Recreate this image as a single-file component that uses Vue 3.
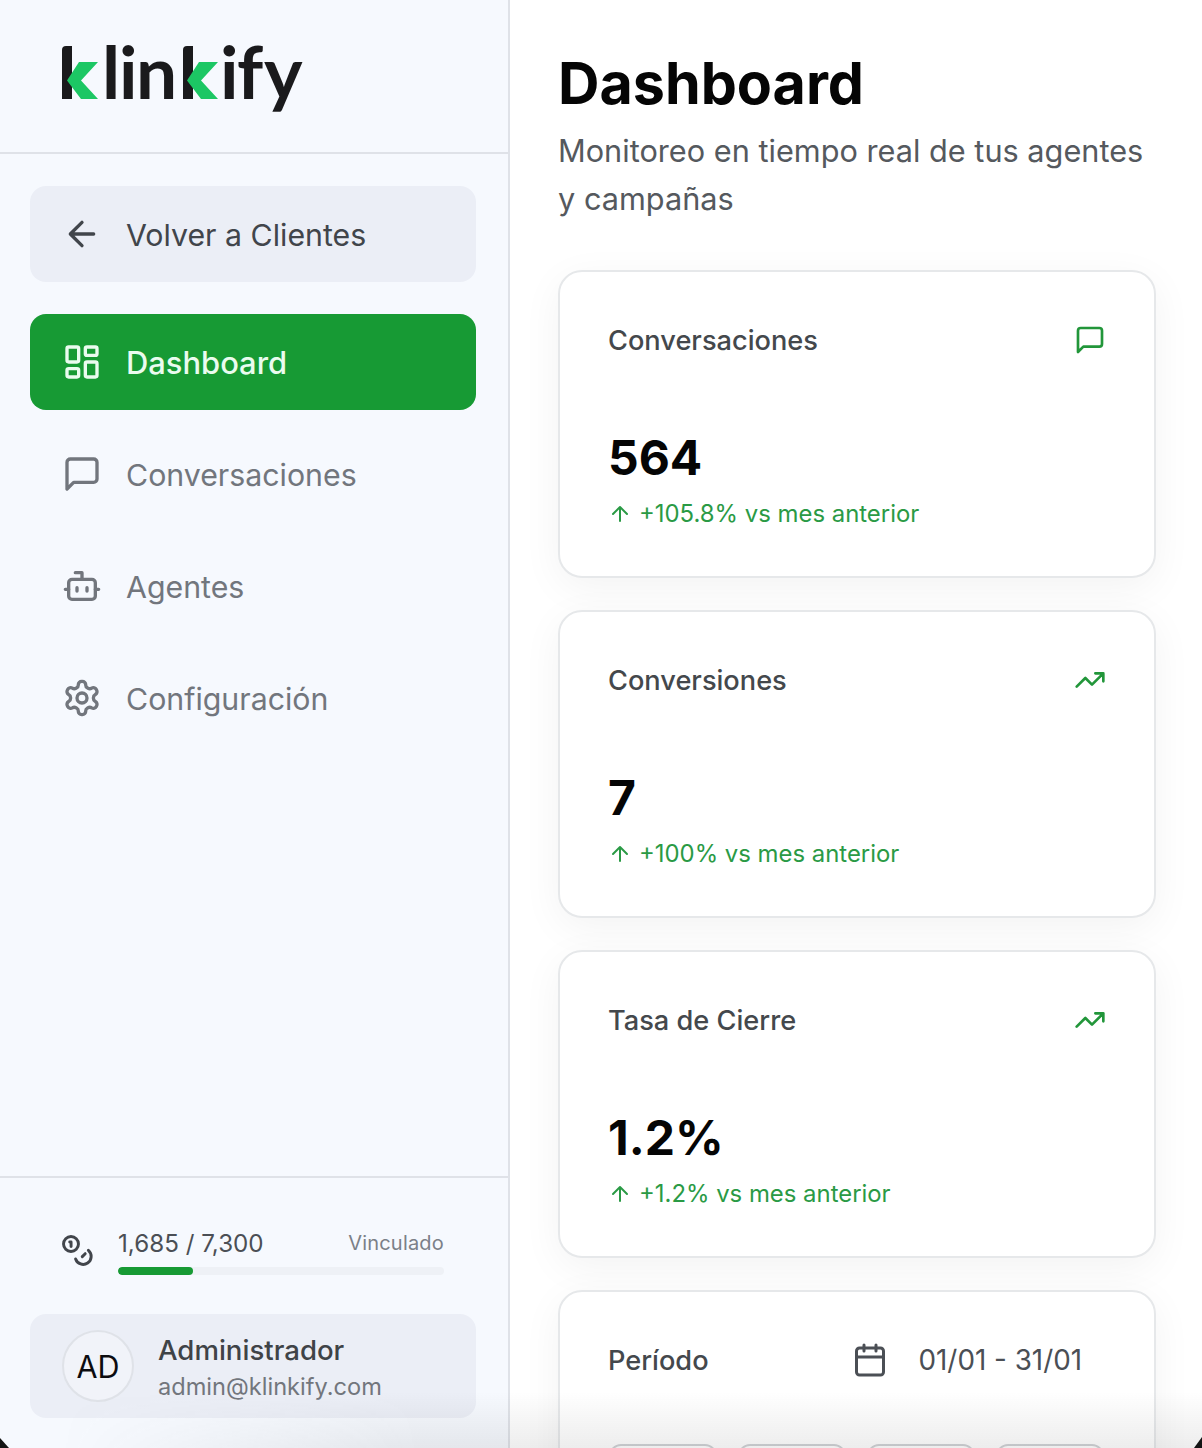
<script setup>
const stats = [
  { title: 'Conversaciones', icon: 'chat', value: '564', delta: '+105.8% vs mes anterior' },
  { title: 'Conversiones', icon: 'trend', value: '7', delta: '+100% vs mes anterior' },
  { title: 'Tasa de Cierre', icon: 'trend', value: '1.2%', delta: '+1.2% vs mes anterior' },
]
</script>

<template>
  <div class="page">
    <aside class="sidebar">
      <div class="brand">
        <div class="logo" role="img" aria-label="klinkify">
          <span class="lt lt-k">k<svg class="chev" viewBox="0 0 32 37"><path d="M12 0H31L14 18.500L31 37H14L0 18.500Z" fill="#1cc764"/></svg></span><span class="lt lt-l">l</span><span class="lt lt-i">i</span><span class="lt lt-n">n</span><span class="lt lt-k lt-k2">k<svg class="chev" viewBox="0 0 32 37"><path d="M12 0H31L14 18.500L31 37H14L0 18.500Z" fill="#1cc764"/></svg></span><span class="lt lt-i">i</span><span class="lt lt-f">f</span><span class="lt lt-y">y</span>
        </div>
      </div>
      <nav class="nav">
        <a class="item back">
          <svg class="ic" viewBox="0 0 24 24"><path d="M19 12H5M12 19l-7-7 7-7"/></svg>
          <span class="label">Volver a Clientes</span>
        </a>
        <a class="item active">
          <svg class="ic" viewBox="0 0 24 24"><rect x="3" y="3" width="7" height="9" rx="1"/><rect x="14" y="3" width="7" height="5" rx="1"/><rect x="14" y="12" width="7" height="9" rx="1"/><rect x="3" y="16" width="7" height="5" rx="1"/></svg>
          <span class="label">Dashboard</span>
        </a>
        <a class="item">
          <svg class="ic" viewBox="0 0 24 24"><path d="M21 15a2 2 0 0 1-2 2H7l-4 4V5a2 2 0 0 1 2-2h14a2 2 0 0 1 2 2z"/></svg>
          <span class="label">Conversaciones</span>
        </a>
        <a class="item">
          <svg class="ic" viewBox="0 0 24 24"><path d="M12 8V4H8"/><rect x="4" y="8" width="16" height="12" rx="2"/><path d="M2 14h2M20 14h2M15 13v2M9 13v2"/></svg>
          <span class="label">Agentes</span>
        </a>
        <a class="item">
          <svg class="ic" viewBox="0 0 24 24"><path d="M12.220 2h-.440a2 2 0 0 0-2 2v.180a2 2 0 0 1-1 1.730l-.430.250a2 2 0 0 1-2 0l-.150-.080a2 2 0 0 0-2.730.730l-.220.380a2 2 0 0 0 .730 2.730l.150.100a2 2 0 0 1 1 1.720v.510a2 2 0 0 1-1 1.740l-.150.090a2 2 0 0 0-.730 2.730l.220.380a2 2 0 0 0 2.730.730l.150-.080a2 2 0 0 1 2 0l.430.250a2 2 0 0 1 1 1.730V20a2 2 0 0 0 2 2h.440a2 2 0 0 0 2-2v-.180a2 2 0 0 1 1-1.730l.430-.250a2 2 0 0 1 2 0l.150.080a2 2 0 0 0 2.730-.730l.220-.390a2 2 0 0 0-.730-2.730l-.150-.080a2 2 0 0 1-1-1.740v-.500a2 2 0 0 1 1-1.740l.150-.090a2 2 0 0 0 .730-2.730l-.220-.380a2 2 0 0 0-2.730-.730l-.150.080a2 2 0 0 1-2 0l-.430-.250a2 2 0 0 1-1-1.730V4a2 2 0 0 0-2-2z"/><circle cx="12" cy="12" r="3"/></svg>
          <span class="label">Configuración</span>
        </a>
      </nav>
      <div class="foot">
        <div class="credits">
          <svg class="coins" viewBox="0 0 24 24"><circle cx="6.750" cy="6.750" r="5.600"/><path d="M5.800 5.200h1v3.400M19.800 11.500A6 6 0 1 1 10.200 18M17.400 14L15.200 16.200"/></svg>
          <div class="meter">
            <div class="meter-top"><span class="used">1,685 / 7,300</span><span class="linked">Vinculado</span></div>
            <div class="track"><div class="fill"></div></div>
          </div>
        </div>
        <div class="user">
          <div class="avatar">AD</div>
          <div class="who">
            <div class="name">Administrador</div>
            <div class="mail">admin@klinkify.com</div>
          </div>
        </div>
      </div>
    </aside>
    <main class="main">
      <h1>Dashboard</h1>
      <p class="sub">Monitoreo en tiempo real de tus agentes y campañas</p>
      <section v-for="s in stats" :key="s.title" class="card">
        <div class="card-head">
          <span class="card-title">{{ s.title }}</span>
          <svg v-if="s.icon === 'chat'" class="card-ic" viewBox="0 0 24 24"><path d="M21 15a2 2 0 0 1-2 2H7l-4 4V5a2 2 0 0 1 2-2h14a2 2 0 0 1 2 2z"/></svg>
          <svg v-else class="card-ic" viewBox="0 0 24 24"><path d="M22 7l-8.500 8.500-5-5L2 17M16 7h6v6"/></svg>
        </div>
        <div class="value">{{ s.value }}</div>
        <div class="delta">
          <svg class="up" viewBox="0 0 24 24"><path d="M12 19V5M5 12l7-7 7 7"/></svg>
          <span>{{ s.delta }}</span>
        </div>
      </section>
      <section class="card period">
        <div class="period-head">
          <span class="card-title">Período</span>
          <div class="range">
            <svg class="cal" viewBox="0 0 24 24"><path d="M8 2v4M16 2v4"/><rect x="3" y="4" width="18" height="18" rx="2"/><path d="M3 10h18"/></svg>
            <span>01/01 - 31/01</span>
          </div>
        </div>
        <div class="pills"><span class="pill"></span><span class="pill"></span><span class="pill"></span><span class="pill"></span></div>
      </section>
    </main>
    <div class="fade"></div>
    <i class="corner cl"></i><i class="corner cr"></i>
  </div>
</template>

<style>
html, body { margin: 0; background: #fff; }
</style>

<style scoped>
.page { position: relative; width: 1202px; height: 1448px; display: flex; overflow: hidden; font-family: Inter, "Liberation Sans", sans-serif; background: #fff; }
.sidebar { width: 508px; height: 1448px; flex: none; display: flex; flex-direction: column; background: #f6f9fe; border-right: 2px solid #dfe2e8; }
.brand { height: 106px; flex: none; border-bottom: 2px solid #dfe2e8; padding: 46px 0 0 62px; }
.logo { display: flex; height: 74px; font: 700 73px/50px Lato, sans-serif; color: #1a1a1c; }
.lt { display: block; position: relative; }
.lt-k { width: 40px; color: transparent; }
.lt-k2 { width: 37px; }
.lt-k::before { content: ""; position: absolute; left: 0; top: 0; width: 10px; height: 53px; background: #1a1a1c; border-radius: 4px 0 0 0; }
.chev { position: absolute; left: 5px; top: 16px; width: 32px; height: 37px; }
.lt-k2 .chev { left: 4px; }
.lt-l { width: 17px; }
.lt-i { width: 17px; }
.lt-n { width: 47px; }
.lt-f { width: 27px; }
.lt-y { width: 38px; }
.nav { display: flex; flex-direction: column; padding: 32px 32px 0 30px; flex: 1; }
.item { display: flex; align-items: center; height: 96px; border-radius: 16px; padding: 0 32px; gap: 24px; font-size: 30.300px; color: #72767d; margin-bottom: 16px; }
.label { padding-top: 2px; }
.ic { width: 40px; height: 40px; flex: none; fill: none; stroke: currentColor; stroke-width: 2; stroke-linecap: round; stroke-linejoin: round; }
.back { background: #ebeef6; color: #41454b; margin-bottom: 32px; }
.active { background: #179a34; color: #eafcef; font-weight: 500; font-size: 30.900px; }
.active .label { padding-top: 0; }
.foot { border-top: 2px solid #dfe2e8; padding: 53px 32px 30px 30px; flex: none; }
.credits { display: flex; align-items: center; padding: 0 32px; gap: 24px; height: 40px; margin-bottom: 43px; }
.coins { width: 32px; height: 32px; flex: none; fill: none; stroke: #41454b; stroke-width: 2.200; stroke-linecap: round; stroke-linejoin: round; }
.meter { flex: 1; }
.meter-top { display: flex; justify-content: space-between; align-items: center; line-height: 32px; }
.used { font-size: 24.200px; color: #4b4f55; }
.linked { font-size: 20px; color: #7b8088; letter-spacing: .2px; margin-bottom: 2px; }
.track { height: 8px; border-radius: 4px; background: #eef1f6; margin-top: 6px; overflow: hidden; }
.fill { width: 23%; height: 100%; border-radius: 4px; background: #179a34; }
.user { display: flex; align-items: center; height: 104px; background: #ebeef6; border-radius: 16px; padding: 0 32px; gap: 24px; }
.avatar { width: 72px; height: 72px; box-sizing: border-box; border: 2px solid #dfe2e8; border-radius: 50%; background: #f1f3f9; color: #0c0c10; display: flex; align-items: center; justify-content: center; font-size: 30.500px; }
.who { padding-top: 3px; }
.name { font-size: 27.600px; line-height: 36px; font-weight: 500; color: #3f4347; }
.mail { font-size: 23.600px; line-height: 32px; margin-top: 3px; color: #72767d; }
.main { flex: 1; min-width: 0; padding: 48px 46px 0 48px; }
h1 { margin: 0; font-size: 57.400px; line-height: 70px; font-weight: 700; color: #050505; }
.sub { margin: 9px 0 47px; font-size: 30.700px; line-height: 48px; color: #55595e; }
.card { box-sizing: border-box; height: 308px; margin-bottom: 32px; border: 2px solid #e6e8ea; border-radius: 24px; background: #fff; padding: 48px; box-shadow: 0 10px 40px rgba(0,0,0,.05); }
.card-head { display: flex; justify-content: space-between; align-items: center; height: 40px; }
.card-title { font-size: 27.200px; font-weight: 500; color: #44484c; }
.card-ic { width: 32px; height: 32px; fill: none; stroke: #22963a; stroke-width: 2; stroke-linecap: round; stroke-linejoin: round; }
.value { margin-top: 70px; font-size: 48px; line-height: 56px; font-weight: 700; color: #050505; }
.delta { display: flex; align-items: center; gap: 7px; margin-top: 12px; font-size: 23.900px; line-height: 32px; color: #2a9a45; }
.up { width: 24px; height: 24px; fill: none; stroke: currentColor; stroke-width: 2; stroke-linecap: round; stroke-linejoin: round; }
.period { height: 400px; }
.period-head { display: flex; justify-content: space-between; align-items: center; height: 40px; }
.range { display: flex; align-items: center; gap: 31px; font-size: 27.800px; color: #4b4f55; margin-right: 24px; }
.cal { width: 36px; height: 36px; margin-left: -1px; fill: none; stroke: #4b4f55; stroke-width: 2; stroke-linecap: round; stroke-linejoin: round; }
.pills { display: flex; gap: 21px; margin: 64px 0 0 1px; }
.pill { width: 108px; height: 40px; border: 2px solid #cfd2d5; border-radius: 12px; box-sizing: border-box; flex: none; }
.fade { position: absolute; left: 0; right: 0; bottom: 0; height: 56px; pointer-events: none; background: linear-gradient(to bottom, rgba(90,90,90,0), rgba(90,90,90,.11)); -webkit-mask-image: linear-gradient(to right, transparent 60px, #000 420px); mask-image: linear-gradient(to right, transparent 60px, #000 420px); }
.corner { position: absolute; bottom: 0; background: #141414; }
.cl { left: 0; width: 9px; height: 10px; clip-path: polygon(0 0, 100% 100%, 0 100%); }
.cr { right: 0; width: 8px; height: 11px; clip-path: polygon(100% 0, 100% 100%, 0 100%); }
</style>
